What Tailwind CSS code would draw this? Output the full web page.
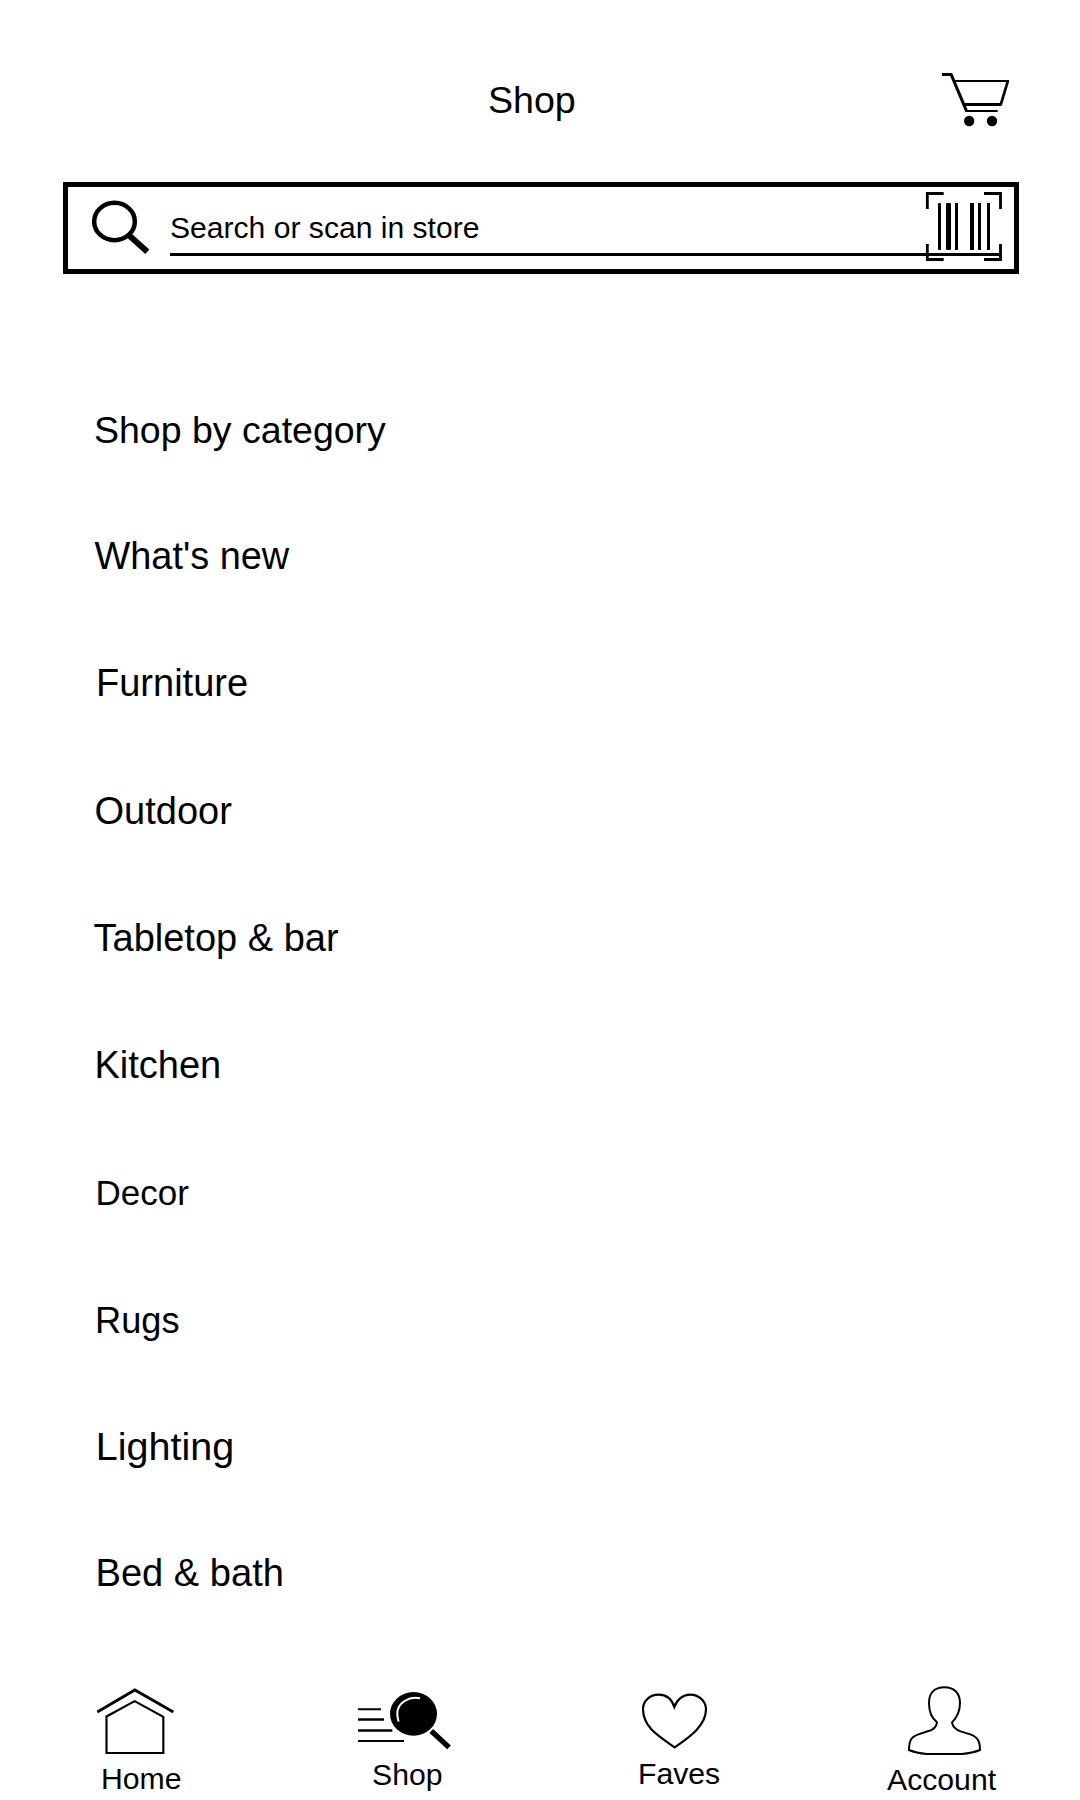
<!DOCTYPE html>
<html lang="en">
<head>
<meta charset="utf-8">
<title>Shop</title>
<script src="https://cdn.jsdelivr.net/npm/@tailwindcss/browser@4"></script>
</head>
<body class="bg-white">
<div class="flex h-[1800px] w-[1080px] flex-col overflow-hidden bg-white font-['Liberation_Sans',Arial,sans-serif] text-black">

  <header class="flex h-[182px] shrink-0 items-start pt-[50px] pr-[50px] pl-[488px]">
    <h1 class="text-[37.6px] leading-[101px]">Shop</h1>
    <svg class="ml-auto h-[90px] w-[110px]" viewBox="0 0 330 270" fill="none" stroke="#000">
      <path d="M66 73.500H94" stroke-width="9"/>
      <path d="M92 70L140 184" stroke-width="9"/>
      <path d="M99 93H267" stroke-width="6"/>
      <path d="M264 92L242 165" stroke-width="8"/>
      <path d="M132 163.500H244" stroke-width="9"/>
      <path d="M138 183H233" stroke-width="6"/>
      <circle cx="147.500" cy="213" r="15.500" fill="#000" stroke="none"/>
      <circle cx="216" cy="213" r="15.500" fill="#000" stroke="none"/>
    </svg>
  </header>

  <div class="relative ml-[63px] flex h-[92px] w-[956px] shrink-0 items-start border-[5px] border-black">
    <svg class="h-[82px] w-[102px] shrink-0" viewBox="54 51 306 246" fill="none" stroke="#000">
      <ellipse cx="193.500" cy="154.500" rx="61" ry="56" stroke-width="13.500"/>
      <path d="M235 194L292 245" stroke-width="18"/>
    </svg>
    <div class="h-[69px] w-[829px] border-b-[3px] border-black pt-[23px]">
      <span class="block text-[30.1px] leading-[36px]">Search or scan in store</span>
    </div>
    <svg class="absolute top-0 left-[852px] h-[82px] w-[90px]" viewBox="60 51 270 246" fill="none" stroke="#000" stroke-width="8.500">
      <path d="M131 70.500H82V117M252 70.500H301.500V117M82 222V268.500H131M301.500 222V268.500H252"/>
      <g fill="#000" stroke="none">
        <rect x="114" y="99" width="9" height="141" rx="3"/>
        <rect x="138" y="99" width="15" height="141" rx="3"/>
        <rect x="165" y="99" width="9" height="141"/>
        <rect x="210" y="99" width="12" height="141"/>
        <rect x="234" y="99" width="9" height="141"/>
        <rect x="261" y="99" width="9" height="141"/>
      </g>
    </svg>
  </div>

  <ul class="mt-[92px] h-[1272px] shrink-0 pl-[94px] text-[38px] leading-[127.200px]">
    <li class="h-[127px] pt-px text-[37.5px]">Shop by category</li>
    <li class="h-[127.400px] pl-[0.5px] text-[37.9px]">What's new</li>
    <li class="pl-[2px]">Furniture</li>
    <li class="pl-[0.5px]">Outdoor</li>
    <li class="-ml-[0.5px]">Tabletop &amp; bar</li>
    <li class="pl-[0.5px]">Kitchen</li>
    <li class="pl-[1.500px] text-[35px]">Decor</li>
    <li class="h-[127.200px] pt-px pl-px text-[36.2px]">Rugs</li>
    <li class="-mt-px pl-[1.800px] text-[39.5px]">Lighting</li>
    <li class="pl-[1.500px] text-[38.100px]">Bed &amp; bath</li>
  </ul>

  <nav class="flex items-start pt-[32px] pl-20 text-[30.2px] leading-[36px]">
    <a class="w-[120px]">
      <svg class="block h-[91px] w-[120px]" viewBox="0 0 360 273" fill="none" stroke="#000">
        <path d="M52 126L164.500 60L280 126" stroke-width="8.500"/>
        <path d="M79.500 249V139.500L164 93.500L250 140.500V249Z" stroke-width="6.500"/>
      </svg>
      <span class="block pl-[21px]">Home</span>
    </a>
    <a class="ml-[140px] w-[130px]">
      <svg class="block h-[87px] w-[130px]" viewBox="0 0 390 261" fill="none" stroke="#000">
        <path d="M54 118H123M54 213H192" stroke-width="6"/>
        <path d="M54 148.500H132M54 181.500H157" stroke-width="8"/>
        <ellipse cx="220.500" cy="131.500" rx="70.500" ry="65.500" fill="#000" stroke="none"/>
        <path d="M240 85C222 81 208 84 194 93C173 106 167 127 176 155" stroke="#fff" stroke-width="6"/>
        <path d="M274 183L327 232" stroke-width="16"/>
      </svg>
      <span class="block pl-[32px]">Shop</span>
    </a>
    <a class="ml-[150px] w-[120px]">
      <svg class="block h-[86px] w-[120px]" viewBox="0 0 360 258" fill="none" stroke="#000" stroke-width="6.500">
        <path d="M163 111C155 87 138 74 116 74C89 74 69 93 69 117C69 171 114 198 164 232C214 198 258 165 258 118C258 93 236 74 210 74C190 74 171 88 163 111Z"/>
      </svg>
      <span class="block pl-[18px]">Faves</span>
    </a>
    <a class="ml-[140px] w-[130px]">
      <svg class="block h-[92px] w-[130px]" viewBox="0 0 390 276" fill="none" stroke="#000" stroke-width="6">
        <path d="M193 52C163 52 147 70 147 99C147 126 153 143 171 157C169 174 159 180 143 184L113 194C91 202 87 216 87 240Q108 249 140 252H245Q278 249 300 240C300 216 295 203 273 194L242 184C228 179 218 171 216 157C231 142 240 123 240 99C240 70 223 52 193 52Z"/>
      </svg>
      <span class="block pl-[7px]">Account</span>
    </a>
  </nav>
</div>
</body>
</html>
